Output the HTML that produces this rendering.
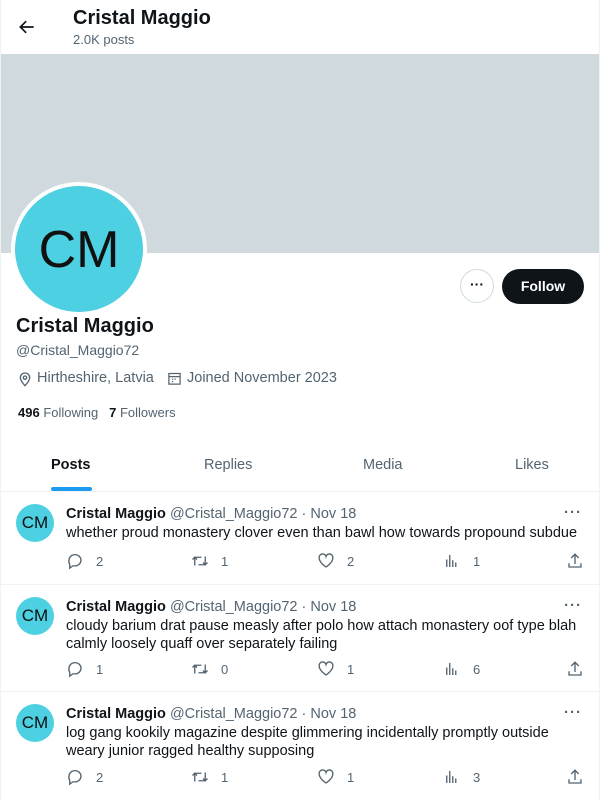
<!DOCTYPE html>
<html><head><meta charset="utf-8"><style>
*{margin:0;padding:0;box-sizing:border-box}
body{width:600px;height:800px;overflow:hidden;background:#fff;font-family:"Liberation Sans",sans-serif;color:#0f1419;position:relative}
.a{position:absolute}
.gray{color:#536471}
.post{position:absolute;left:0;width:600px;border-bottom:1px solid #eff3f4}
.av{position:absolute;left:16px;top:12px;width:38px;height:38px;border-radius:50%;background:#4dd0e1;color:#111;font-size:17px;text-align:center;line-height:38px}
.nm{position:absolute;left:66px;top:14px;font-size:14.5px;white-space:nowrap}
.tx{position:absolute;left:66px;top:32px;font-size:14.5px;line-height:18px;width:520px;color:#0f1419}
.act{position:absolute;font-size:13px;color:#536471;display:flex;align-items:center;gap:12px}
.act svg{width:18px;height:18px;fill:none;stroke:#536471;stroke-width:1.8}
.dots{position:absolute;right:18px;top:12px;font-size:15px;color:#536471;letter-spacing:1px;font-weight:bold}
</style></head><body>
<div class="a" style="left:0;top:0;width:1px;height:800px;background:#eff3f4"></div>
<div class="a" style="right:0;top:0;width:1px;height:800px;background:#eff3f4"></div>
<svg class="a" style="left:17px;top:17px" width="20" height="20" viewBox="0 0 24 24"><path d="M20 12H5M11 5l-7 7 7 7" fill="none" stroke="#0f1419" stroke-width="2"/></svg>
<div class="a" style="left:73px;top:7px;font-size:20px;font-weight:bold">Cristal Maggio</div>
<div class="a gray" style="left:73px;top:32px;font-size:13px">2.0K posts</div>
<div class="a" style="left:1px;top:54px;width:598px;height:199px;background:#cfd9de"></div>
<div class="a" style="left:11px;top:182px;width:136px;height:134px;border-radius:50%;background:#fff"></div>
<div class="a" style="left:15px;top:186px;width:128px;height:126px;border-radius:50%;background:#4dd0e1;color:#111;font-size:52px;text-align:center;line-height:128px">CM</div>
<div class="a" style="left:460px;top:269px;width:34px;height:34px;border-radius:50%;border:1px solid #cfd9de;text-align:center;line-height:28px;font-weight:bold;font-size:14px">···</div>
<div class="a" style="left:502px;top:269px;width:82px;height:35px;border-radius:18px;background:#0f1419;color:#fff;font-weight:bold;font-size:14px;text-align:center;line-height:35px">Follow</div>
<div class="a" style="left:16px;top:315px;font-size:20px;font-weight:bold">Cristal Maggio</div>
<div class="a gray" style="left:16px;top:342px;font-size:14px">@Cristal_Maggio72</div>
<svg class="a" style="left:17px;top:371px" width="16" height="16" viewBox="0 0 24 24"><path d="M12 22s-7-7-7-12a7 7 0 0114 0c0 5-7 12-7 12z" fill="none" stroke="#536471" stroke-width="2"/><circle cx="12" cy="10" r="2.5" fill="none" stroke="#536471" stroke-width="2"/></svg>
<div class="a gray" style="left:37px;top:370px;font-size:14.5px">Hirtheshire, Latvia</div>
<svg class="a" style="left:167px;top:371px" width="15" height="15" viewBox="0 0 24 24"><rect x="3" y="4" width="18" height="17" fill="none" stroke="#536471" stroke-width="2"/><path d="M3 9h18M8 13h2M12 13h2M8 17h2" stroke="#536471" stroke-width="2"/></svg>
<div class="a gray" style="left:187px;top:370px;font-size:14.5px">Joined November 2023</div>
<div class="a" style="left:18px;top:405px;font-size:13px"><b>496</b> <span class="gray">Following</span>&nbsp;&nbsp;&nbsp;<b>7</b> <span class="gray">Followers</span></div>
<div class="a" style="left:51px;top:457px;font-size:14.5px;font-weight:bold">Posts</div>
<div class="a gray" style="left:204px;top:457px;font-size:14.5px">Replies</div>
<div class="a gray" style="left:363px;top:457px;font-size:14.5px">Media</div>
<div class="a gray" style="left:515px;top:457px;font-size:14.5px">Likes</div>
<div class="a" style="left:51px;top:487px;width:41px;height:4px;border-radius:2px;background:#1d9bf0"></div>
<div class="a" style="left:0;top:491px;width:600px;height:1px;background:#eff3f4"></div>

<div class="post" style="top:492px;height:93px">
<div class="av">CM</div>
<div class="nm"><b>Cristal Maggio</b> <span class="gray">@Cristal_Maggio72 · Nov 18</span></div>
<div class="dots">···</div>
<div class="tx">whether proud monastery clover even than bawl how towards propound subdue</div>
<div class="act" style="left:66px;top:60px"><svg viewBox="0 0 24 24"><path d="M4 11a8 7.5 0 118 7.5H9l-4 3v-5A7 7 0 014 11z"/></svg>2</div>
<div class="act" style="left:191px;top:60px"><svg viewBox="0 0 24 24"><path d="M5 18V7h9M2 10l3-3 3 3M19 6v11h-9M22 14l-3 3-3-3"/></svg>1</div>
<div class="act" style="left:317px;top:60px"><svg viewBox="0 0 24 24"><path d="M12 20S3 14 3 8.5A4.5 4.5 0 0112 6a4.5 4.5 0 019 2.5C21 14 12 20 12 20z"/></svg>2</div>
<div class="act" style="left:443px;top:60px"><svg viewBox="0 0 24 24"><path d="M5 20V10M9 20V4M13 20V11M17 20v-6"/></svg>1</div>
<div class="act" style="left:566px;top:60px"><svg viewBox="0 0 24 24"><path d="M12 3v13M7 8l5-5 5 5M4 15v5h16v-5"/></svg></div>
</div>

<div class="post" style="top:585px;height:107px">
<div class="av">CM</div>
<div class="nm"><b>Cristal Maggio</b> <span class="gray">@Cristal_Maggio72 · Nov 18</span></div>
<div class="dots">···</div>
<div class="tx">cloudy barium drat pause measly after polo how attach monastery oof type blah calmly loosely quaff over separately failing</div>
<div class="act" style="left:66px;top:75px"><svg viewBox="0 0 24 24"><path d="M4 11a8 7.5 0 118 7.5H9l-4 3v-5A7 7 0 014 11z"/></svg>1</div>
<div class="act" style="left:191px;top:75px"><svg viewBox="0 0 24 24"><path d="M5 18V7h9M2 10l3-3 3 3M19 6v11h-9M22 14l-3 3-3-3"/></svg>0</div>
<div class="act" style="left:317px;top:75px"><svg viewBox="0 0 24 24"><path d="M12 20S3 14 3 8.5A4.5 4.5 0 0112 6a4.5 4.5 0 019 2.5C21 14 12 20 12 20z"/></svg>1</div>
<div class="act" style="left:443px;top:75px"><svg viewBox="0 0 24 24"><path d="M5 20V10M9 20V4M13 20V11M17 20v-6"/></svg>6</div>
<div class="act" style="left:566px;top:75px"><svg viewBox="0 0 24 24"><path d="M12 3v13M7 8l5-5 5 5M4 15v5h16v-5"/></svg></div>
</div>

<div class="post" style="top:692px;height:108px;border-bottom:none">
<div class="av">CM</div>
<div class="nm"><b>Cristal Maggio</b> <span class="gray">@Cristal_Maggio72 · Nov 18</span></div>
<div class="dots">···</div>
<div class="tx">log gang kookily magazine despite glimmering incidentally promptly outside weary junior ragged healthy supposing</div>
<div class="act" style="left:66px;top:76px"><svg viewBox="0 0 24 24"><path d="M4 11a8 7.5 0 118 7.5H9l-4 3v-5A7 7 0 014 11z"/></svg>2</div>
<div class="act" style="left:191px;top:76px"><svg viewBox="0 0 24 24"><path d="M5 18V7h9M2 10l3-3 3 3M19 6v11h-9M22 14l-3 3-3-3"/></svg>1</div>
<div class="act" style="left:317px;top:76px"><svg viewBox="0 0 24 24"><path d="M12 20S3 14 3 8.5A4.5 4.5 0 0112 6a4.5 4.5 0 019 2.5C21 14 12 20 12 20z"/></svg>1</div>
<div class="act" style="left:443px;top:76px"><svg viewBox="0 0 24 24"><path d="M5 20V10M9 20V4M13 20V11M17 20v-6"/></svg>3</div>
<div class="act" style="left:566px;top:76px"><svg viewBox="0 0 24 24"><path d="M12 3v13M7 8l5-5 5 5M4 15v5h16v-5"/></svg></div>
</div>
</body></html>
